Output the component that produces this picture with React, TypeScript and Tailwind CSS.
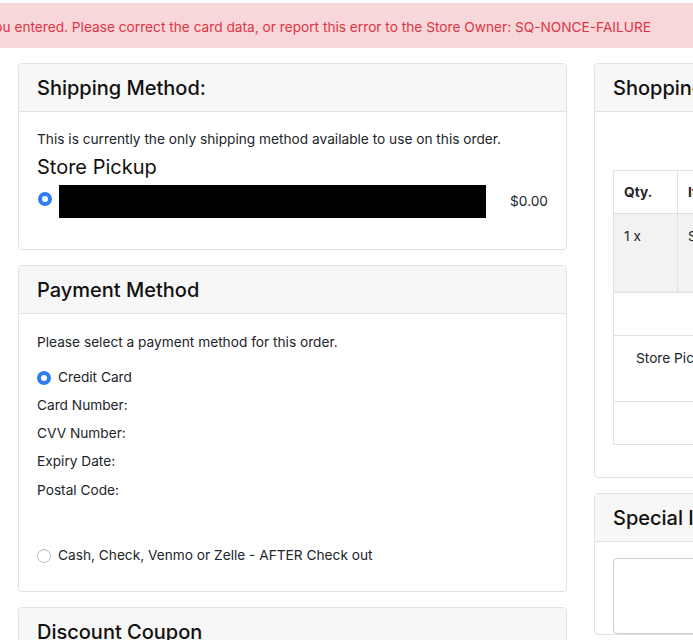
import React from 'react'

const font = { fontFamily: 'Inter, "Liberation Sans", Arial, sans-serif' }

function Radio({ checked }: { checked?: boolean }) {
  return checked ? (
    <span className="inline-block h-[14px] w-[14px] shrink-0 rounded-full border-[4px] border-[#2f7cf6] bg-white" />
  ) : (
    <span className="inline-block h-[14px] w-[14px] shrink-0 rounded-full border border-[#bdbdbd] bg-white shadow-[inset_0_1px_1px_rgba(0,0,0,0.08)]" />
  )
}

function CardHeader({ title }: { title: string }) {
  return (
    <div className="flex h-[48px] items-center whitespace-nowrap border-b border-[#e2e2e2] bg-[#f7f7f7] px-[18px] text-[20px] font-medium leading-6 text-[#111]">
      {title}
    </div>
  )
}

export default function App() {
  return (
    <div className="h-screen w-full overflow-hidden bg-white text-[13.7px] text-[#212529]" style={font}>
      {/* Alert */}
      <div className="mt-[3px] flex h-[45px] items-center justify-end overflow-hidden bg-[#f8d7da] pr-[42px] pt-[3px]">
        <span className="whitespace-nowrap text-[#dc3545]">
          There was an error processing the card data you entered. Please correct the card data, or report this error to the Store Owner: SQ-NONCE-FAILURE
        </span>
      </div>

      <div className="mt-[15px] flex gap-[27px] pl-[18px]">
        {/* Left column */}
        <div className="flex w-[549px] shrink-0 flex-col gap-[15px]">
          <div className="overflow-hidden rounded-[4px] border border-[#e2e2e2]">
            <CardHeader title="Shipping Method:" />
            <div className="px-[18px] pb-[31px] pt-[17px]">
              <p className="leading-[21px]">This is currently the only shipping method available to use on this order.</p>
              <div className="mt-[5px] text-[20px] leading-6 text-[#111]">Store Pickup</div>
              <div className="mt-[6px] flex items-center">
                <span className="ml-[1px]"><Radio checked /></span>
                <div className="ml-[7px] h-[33px] w-[427px] bg-black" />
                <span className="ml-auto">$0.00</span>
              </div>
            </div>
          </div>

          <div className="overflow-hidden rounded-[4px] border border-[#e2e2e2]">
            <CardHeader title="Payment Method" />
            <div className="px-[18px] pb-[25px] pt-[18px]">
              <p className="leading-[21px]">Please select a payment method for this order.</p>
              <div className="mt-[14px] flex items-center gap-[7px] leading-[21px]">
                <Radio checked />
                <span>Credit Card</span>
              </div>
              <div className="mt-[7px] leading-[21px]">Card Number:</div>
              <div className="mt-[7px] leading-[21px]">CVV Number:</div>
              <div className="mt-[7px] leading-[21px]">Expiry Date:</div>
              <div className="mt-[8px] leading-[21px]">Postal Code:</div>
              <div className="mt-[44px] flex items-center gap-[7px] leading-[21px]">
                <Radio />
                <span>Cash, Check, Venmo or Zelle - AFTER Check out</span>
              </div>
            </div>
          </div>

          <div className="overflow-hidden rounded-[4px] border border-[#e2e2e2]">
            <CardHeader title="Discount Coupon" />
            <div className="h-[80px]" />
          </div>
        </div>

        {/* Right column */}
        <div className="flex w-[520px] shrink-0 flex-col gap-[15px]">
          <div className="overflow-hidden rounded-[4px] border border-[#e2e2e2]">
            <CardHeader title="Shopping Cart" />
            <div className="px-[18px] pb-[32px] pt-[58px]">
              <div className="border border-[#dee2e6]">
                <div className="flex h-[43px] border-b border-[#dee2e6] font-bold">
                  <div className="flex w-[64px] items-center border-r border-[#dee2e6] px-[10px]">Qty.</div>
                  <div className="flex items-center px-[10px]">Item(s)</div>
                </div>
                <div className="flex h-[79px] border-b border-[#dee2e6] bg-[#f2f2f2]">
                  <div className="w-[64px] border-r border-[#dee2e6] px-[10px] pt-[12px] leading-[21px]">1 x</div>
                  <div className="px-[10px] pt-[12px] leading-[21px]">Sample Item</div>
                </div>
                <div className="h-[43px] border-b border-[#dee2e6]" />
                <div className="h-[66px] border-b border-[#dee2e6] px-[22px] pt-[12px] leading-[21px]">Store Pickup</div>
                <div className="h-[42px]" />
              </div>
            </div>
          </div>

          <div className="overflow-hidden rounded-[4px] border border-[#e2e2e2]">
            <CardHeader title="Special Instructions" />
            <div className="px-[18px] pt-[16px]">
              <div className="h-[76px] rounded-[4px] border border-[#d0d0d0]" />
            </div>
          </div>
        </div>
      </div>
    </div>
  )
}
